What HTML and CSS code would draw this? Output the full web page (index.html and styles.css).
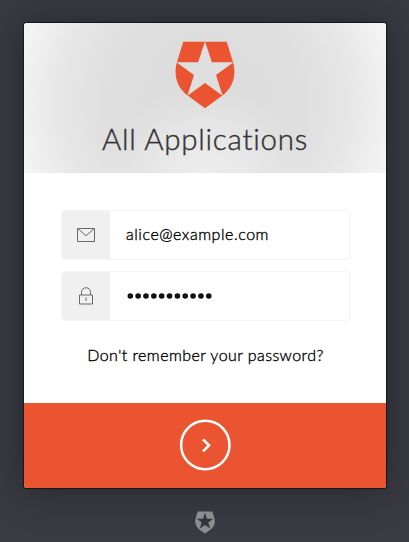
FILE: index.html
```
<!DOCTYPE html>
<html lang="en">
<head>
<meta charset="utf-8">
<title>All Applications</title>
<link rel="stylesheet" href="styles.css">
</head>
<body>
<form class="card">
  <header class="header">
    <svg class="logo" width="60" height="68" viewBox="0 0 60 68">
      <path fill="#ea5430" d="M8.3 .8H51.7L58.1 21.2C61.7 33 58.3 47 47 54.7L30 67.2 13 54.7C1.700 47-1.700 33 1.900 21.2Z"/>
      <path fill="#dfdfdf" d="M30 .5 36.900 21.200H58.600L41 34 47.600 54.800 30 42 12.400 54.800 19 34 1.400 21.200H23.100Z"/>
    </svg>
    <h1 class="title">All Applications</h1>
  </header>
  <main class="fields">
    <div class="field">
      <span class="icon"><svg width="18" height="14" viewBox="0 0 18 14" fill="none" stroke="#686868"><path d="M.5.5H17.500V13.500H.5ZM1 .8 9 7.700 17 .8"/></svg></span>
      <span class="value email">alice@example.com</span>
    </div>
    <div class="field">
      <span class="icon"><svg width="16" height="18" viewBox="0 0 16 18" fill="none" stroke="#686868"><path d="M1.500 8H14.500V17H1.500ZM3.500 8V5.200C3.500-.7 12.500-.7 12.500 5.200V8M8 10.500V14"/></svg></span>
      <span class="value"><svg width="87" height="6" viewBox="0 0 87 6"><path d="M3.300 3H85" fill="none" stroke="#111" stroke-width="5.600" stroke-linecap="round" stroke-dasharray="0 7.850"/></svg></span>
    </div>
    <a class="forgot">Don't remember your password?</a>
  </main>
  <footer class="submit">
    <svg width="52" height="52" viewBox="0 0 52 52" fill="none" stroke="#fff"><circle cx="26.300" cy="26" r="24.200" stroke-width="2.500"/><path d="M24 20.300 30 26.300 24 32.300" stroke-width="2.600"/></svg>
  </footer>
</form>
<svg class="badge" width="20" height="23" viewBox="0 0 60 68">
  <path fill="#8c8d91" d="M8.300 .8H51.700L58.100 21.200C61.700 33 58.300 47 47 54.700L30 67.200 13 54.700C1.700 47-1.700 33 1.900 21.200Z"/>
  <path fill="#33343a" d="M30 5 36 22.500H54.500L40 34 45.500 52 30 41.500 14.500 52 20 34 5.500 22.500H24Z"/>
</svg>
</body>
</html>
```
FILE: styles.css
```
* { box-sizing: border-box; }
body {
  margin: 0;
  height: 542px;
  padding-top: 23px;
  overflow: hidden;
  display: flex;
  flex-direction: column;
  align-items: center;
  background: #393a42;
  font-family: Lato, "Open Sans", sans-serif;
  color: #000;
}
.card {
  width: 362px;
  height: 465px;
  margin-left: 1px;
  flex: none;
  display: flex;
  flex-direction: column;
  border-radius: 3px;
  overflow: hidden;
  background: #fff;
  box-shadow: 0 0 1px 1px #15171c, 0 0 40px 2px rgba(0, 0, 0, .3);
}
.header {
  height: 150px;
  padding-top: 18px;
  display: flex;
  flex-direction: column;
  align-items: center;
  background:
    radial-gradient(ellipse 100px 85px at 50% 100%, #ececec 0%, rgba(236, 236, 236, .75) 40%, rgba(236, 236, 236, 0) 100%),
    radial-gradient(ellipse 205px 210px at 50% 52%, #dcdcdc 0%, #dedede 45%, #e6e6e6 70%, #f8f8f8 100%);
}
.logo { display: block; }
.title {
  margin: 12px 0 0;
  font-size: 29.5px;
  line-height: 36px;
  font-weight: 300;
  letter-spacing: .75px;
  white-space: nowrap;
  color: #333;
  -webkit-text-stroke: .4px #333;
}
.fields {
  height: 230px;
  padding: 37px 36px 0 37px;
  display: flex;
  flex-direction: column;
  gap: 11px;
}
.field {
  height: 50px;
  display: flex;
  border: 1px solid #f4f4f4;
  border-radius: 4px;
  overflow: hidden;
}
.icon {
  width: 48px;
  display: flex;
  align-items: center;
  justify-content: center;
  background: #f0f0f0;
}
.value {
  display: flex;
  align-items: center;
  padding-left: 17px;
  font-size: 16px;
}
.email {
  padding: 0 0 3px 16px;
  font-weight: 300;
  letter-spacing: .54px;
  -webkit-text-stroke: .35px #000;
}
.forgot {
  margin-top: 12px;
  align-self: center;
  font-size: 16px;
  line-height: 22px;
  font-weight: 300;
  letter-spacing: .43px;
  -webkit-text-stroke: .35px #000;
  white-space: nowrap;
}
.submit {
  flex: 1;
  display: flex;
  align-items: center;
  justify-content: center;
  padding-bottom: 1px;
  background: #ea5430;
}
.badge { margin: 23px 0 0 1px; flex: none; }
```
